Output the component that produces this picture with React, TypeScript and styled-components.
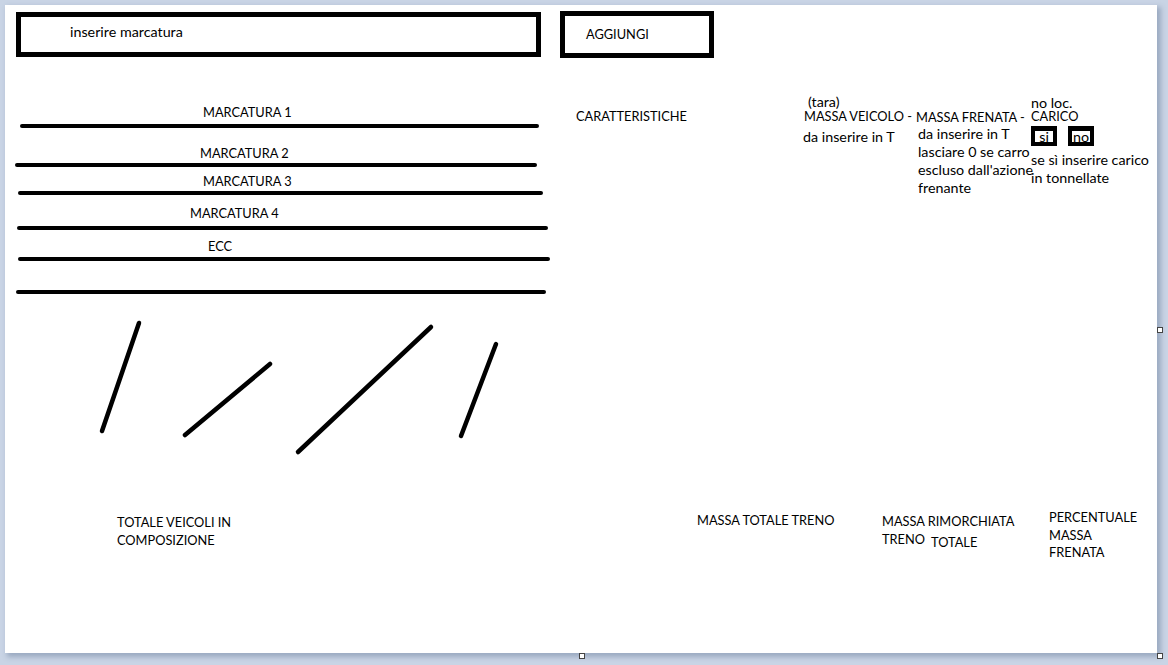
import React from 'react'
import styled, { createGlobalStyle, css } from 'styled-components'

const GlobalStyle = createGlobalStyle`
  html, body {
    margin: 0;
    padding: 0;
  }
  body {
    background: #c9d4e5;
    font-family: Lato, "Liberation Sans", sans-serif;
  }
`

// capitals are drawn a bit smaller, like the narrow caps of the original font
const caps = css`
  font-size: 12.8px;
`

type Mark = { label?: string; lx?: number; lt?: number; rt: number; x1: number; x2: number }

const marks: Mark[] = [
  { label: 'MARCATURA 1', lx: 198, lt: 45, rt: 3, x1: 15, x2: 534 },
  { label: 'MARCATURA 2', lx: 195, lt: 16, rt: 1, x1: 10, x2: 532 },
  { label: 'MARCATURA 3', lx: 198, lt: 5, rt: 1, x1: 13, x2: 538 },
  { label: 'MARCATURA 4', lx: 185, lt: 9, rt: 4, x1: 12, x2: 543 },
  { label: 'ECC', lx: 203, lt: 7, rt: 2, x1: 13, x2: 545 },
  { rt: 29, x1: 11, x2: 541 },
]

// free-hand strokes under the list
const strokes = [
  [134, 18, 97, 126],
  [265, 59, 180, 130],
  [426, 22, 293, 147],
  [491, 39, 456, 131],
]

const App: React.FC = () => {
  return (
    <Workspace>
      <GlobalStyle />
      <Canvas>
        <TopRow>
          <InputBox>inserire marcatura</InputBox>
          <AddButton>AGGIUNGI</AddButton>
        </TopRow>

        <Middle>
          <LeftCol>
            {marks.map((m, i) => (
              <React.Fragment key={i}>
                {m.label && (
                  <MarkLabel $x={m.lx!} $top={m.lt!}>
                    {m.label}
                  </MarkLabel>
                )}
                <Rule $x1={m.x1} $x2={m.x2} $top={m.rt} />
              </React.Fragment>
            ))}
            <Sketch width="550" height="160" viewBox="0 0 550 160">
              {strokes.map(([x1, y1, x2, y2], i) => (
                <line
                  key={i}
                  x1={x1}
                  y1={y1}
                  x2={x2}
                  y2={y2}
                  stroke="#000"
                  strokeWidth="4.5"
                  strokeLinecap="round"
                />
              ))}
            </Sketch>
          </LeftCol>

          <RightArea>
            <Column $w={227} $top={49} $left={21}>
              <Line $caps>CARATTERISTICHE</Line>
            </Column>
            <Column $w={113} $top={37}>
              <Line $indent={5} $lh={13}>(tara)</Line>
              <Line $caps $indent={1} $lh={13} $top={2}>MASSA VEICOLO -</Line>
              <Line $top={5}>da inserire in T</Line>
            </Column>
            <Column $w={115} $top={50}>
              <Line $caps>MASSA FRENATA -</Line>
              <Line $indent={2} $top={-1}>da inserire in T</Line>
              <Line $indent={2}>lasciare 0 se carro</Line>
              <Line $indent={2}>escluso dall'azione</Line>
              <Line $indent={2}>frenante</Line>
            </Column>
            <Column $top={39}>
              <Line $lh={11}>no loc.</Line>
              <Line $caps $lh={11} $top={3}>CARICO</Line>
              <Toggles>
                <Toggle $center>si</Toggle>
                <Toggle>no</Toggle>
              </Toggles>
              <Line $top={5}>se sì inserire carico</Line>
              <Line>in tonnellate</Line>
            </Column>
          </RightArea>
        </Middle>

        <Footer>
          <Column $top={48}>
            <Line $caps>TOTALE VEICOLI IN</Line>
            <Line $caps>COMPOSIZIONE</Line>
          </Column>
          <Column $top={46}>
            <Line $caps>MASSA TOTALE TRENO</Line>
          </Column>
          <Column $top={47}>
            <Line $caps>MASSA RIMORCHIATA</Line>
            <SplitLine>
              <span>TRENO</span>
              <Shifted>TOTALE</Shifted>
            </SplitLine>
          </Column>
          <Column $top={43}>
            <Line $caps>PERCENTUALE</Line>
            <Line $caps>MASSA</Line>
            <Line $caps $top={-1}>FRENATA</Line>
          </Column>
        </Footer>

        <Handle $x={1152} $y={322} />
        <Handle $x={574} $y={648} />
        <Handle $x={1152} $y={648} />
      </Canvas>
    </Workspace>
  )
}

const Workspace = styled.div`
  width: 1168px;
  height: 665px;
  box-sizing: border-box;
  padding: 5px 0 0 5px;
  overflow: hidden;
  background: #c9d4e5;
`

const Canvas = styled.div`
  position: relative;
  width: 1152px;
  height: 648px;
  background: #fff;
  box-shadow: 3px 3px 5px 1px rgba(100, 120, 150, 0.45);
  display: flex;
  flex-direction: column;
  font-size: 14.3px;
  line-height: 18px;
  color: #000;
`

const TopRow = styled.div`
  display: flex;
  align-items: flex-start;
  gap: 19px;
  padding: 6px 0 0 11px;
  height: 53px;
  box-sizing: border-box;
`

const InputBox = styled.div`
  width: 525px;
  height: 45px;
  margin-top: 1px;
  box-sizing: border-box;
  border: 5px solid #000;
  padding: 0 0 5px 49px;
  display: flex;
  align-items: center;
`

const AddButton = styled.div`
  ${caps};
  width: 154px;
  height: 47px;
  box-sizing: border-box;
  border: 5px solid #000;
  padding: 0 0 1px 21px;
  display: flex;
  align-items: center;
`

const Middle = styled.div`
  display: flex;
  align-items: flex-start;
`

const LeftCol = styled.div`
  width: 550px;
  flex: none;
  display: flex;
  flex-direction: column;
`

const MarkLabel = styled.div<{ $x: number; $top: number }>`
  ${caps};
  margin: ${(p) => p.$top}px 0 0 ${(p) => p.$x}px;
  white-space: nowrap;
`

const Rule = styled.div<{ $x1: number; $x2: number; $top: number }>`
  margin: ${(p) => p.$top}px 0 0 ${(p) => p.$x1}px;
  width: ${(p) => p.$x2 - p.$x1}px;
  height: 4px;
  border-radius: 2px;
  background: #000;
`

const Sketch = styled.svg`
  display: block;
  margin-top: 11px;
`

const RightArea = styled.div`
  display: flex;
  align-items: flex-start;
`

const Column = styled.div<{ $w?: number; $top?: number; $left?: number }>`
  flex: none;
  width: ${(p) => (p.$w ? `${p.$w}px` : 'auto')};
  margin: ${(p) => p.$top ?? 0}px 0 0 ${(p) => p.$left ?? 0}px;
  display: flex;
  flex-direction: column;
`

const Line = styled.div<{ $indent?: number; $top?: number; $lh?: number; $caps?: boolean }>`
  white-space: nowrap;
  padding-left: ${(p) => p.$indent ?? 0}px;
  margin-top: ${(p) => p.$top ?? 0}px;
  line-height: ${(p) => p.$lh ?? 18}px;
  ${(p) => p.$caps && caps};
`

const Toggles = styled.div`
  display: flex;
  gap: 11px;
  margin-top: 4px;
`

const Toggle = styled.div<{ $center?: boolean }>`
  width: 26px;
  height: 20px;
  box-sizing: border-box;
  border: 4px solid #000;
  border-width: 5px 4px 4px 4px;
  overflow: hidden;
  display: flex;
  align-items: center;
  justify-content: ${(p) => (p.$center ? 'center' : 'flex-start')};
  padding-left: ${(p) => (p.$center ? 0 : 1)}px;
  line-height: 11px;
  background: #fff;
`

const Footer = styled.div`
  ${caps};
  display: grid;
  grid-template-columns: 580px 185px 167px 1fr;
  align-items: start;
  padding-left: 112px;
`

const SplitLine = styled.div`
  display: flex;
  white-space: nowrap;
  & > span:first-child {
    width: 49px;
  }
`

const Shifted = styled.span`
  padding-top: 3px;
`

const Handle = styled.div<{ $x: number; $y: number }>`
  position: absolute;
  left: ${(p) => p.$x}px;
  top: ${(p) => p.$y}px;
  width: 6px;
  height: 6px;
  box-sizing: border-box;
  border: 1px solid #444;
  background: #fff;
`

export default App
